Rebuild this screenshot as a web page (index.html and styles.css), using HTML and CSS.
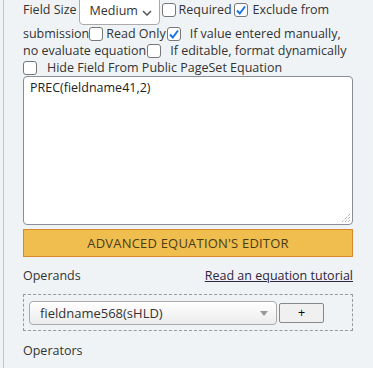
FILE: index.html
```html
<!DOCTYPE html>
<html>
<head>
<meta charset="utf-8">
<link rel="stylesheet" href="styles.css">
</head>
<body>
<div class="panel">
  <div class="row row1">
    <span class="lbl">Field Size</span>
    <span class="select">Medium
      <svg class="chev" width="10" height="6" viewBox="0 0 10 6"><path d="M1 1l4 4 4-4" fill="none" stroke="#555" stroke-width="1.5"/></svg>
    </span>
    <span class="cb"></span><span class="lbl t-req">Required</span><span class="cb checked"><svg width="12" height="12" viewBox="0 0 12 12"><path d="M2 6.5l2.8 3L10 2.5" fill="none" stroke="#1a73e8" stroke-width="2"/></svg></span><span class="lbl t-exc">Exclude from</span>
  </div>
  <div class="row row2">
    <span class="lbl">submission</span><span class="cb"></span><span class="lbl t-ro">Read Only</span><span class="cb checked"><svg width="12" height="12" viewBox="0 0 12 12"><path d="M2 6.5l2.8 3L10 2.5" fill="none" stroke="#1a73e8" stroke-width="2"/></svg></span><span class="lbl t-if">If value entered manually,</span>
  </div>
  <div class="row row3">
    <span class="lbl">no evaluate equation</span><span class="cb"></span><span class="lbl t-if2">If editable, format dynamically</span>
  </div>
  <div class="row row4">
    <span class="cb"></span><span class="lbl t-hide">Hide Field From Public PageSet Equation</span>
  </div>
  <div class="textarea">PREC(fieldname41,2)
    <svg class="grip" width="10" height="10" viewBox="0 0 10 10"><path d="M9 1L1 9M9 4L4 9M9 7L7 9" stroke="#888" stroke-width="1" stroke-dasharray="1 1"/></svg>
  </div>
  <div class="adv">ADVANCED EQUATION'S EDITOR</div>
  <div class="operands">
    <span class="lbl">Operands</span>
    <a class="link">Read an equation tutorial</a>
  </div>
  <div class="dashed">
    <div class="fsel">fieldname568(sHLD)<span class="tri"></span></div>
    <div class="plus">+</div>
  </div>
  <div class="operators">Operators</div>
</div>
</body>
</html>
```
FILE: styles.css
```css
html, body { margin: 0; padding: 0; }
body {
  background: #f0f3f6;
  font-family: "Open Sans", "Noto Sans", sans-serif;
  font-size: 12.5px;
  color: #333;
  width: 373px;
  height: 368px;
  overflow: hidden;
}
.panel {
  margin-left: 3px;
  border-left: 1px solid #c4c4c4;
  padding-left: 19px;
  width: 330px;
  height: 368px;
}
.row { display: flex; align-items: center; white-space: nowrap; height: 17px; }
.lbl { line-height: 17px; }
.row1 { height: 24px; align-items: flex-start; }
.row1 .lbl { margin-top: 1px; }
.row1 .cb { margin-top: 3px; }
.select {
  box-sizing: border-box;
  margin-top: -7px;
  margin-left: 2px;
  width: 81px;
  height: 32px;
  background: #fff;
  border: 1px solid #aaa;
  border-radius: 0 0 4px 4px;
  padding: 8px 0 0 10px;
  line-height: 17px;
  position: relative;
}
.chev { position: absolute; left: 62px; top: 16px; }
.cb {
  box-sizing: border-box;
  display: inline-flex;
  align-items: center;
  justify-content: center;
  width: 14px;
  height: 14px;
  border: 1px solid #777;
  border-radius: 3px;
  background: #fff;
  flex: none;
}
.row1 .select + .cb { margin-left: 2px; }
.t-req { margin-left: 3px; margin-right: 2px; }
.t-exc { margin-left: 5px; }
.row2 { margin-top: 1px; }
.t-ro { margin-left: 3px; margin-right: 1px; }
.t-if { margin-left: 9px; }
.row3 .cb { margin-left: 1px; }
.t-if2 { margin-left: 9px; }
.t-hide { margin-left: 10px; }
.textarea {
  box-sizing: border-box;
  position: relative;
  width: 330px;
  height: 149px;
  background: #fff;
  border: 1px solid #8a8f96;
  border-radius: 4px;
  padding: 2px 6px;
  line-height: 17px;
  font-size: 12.5px;
  color: #222;
}
.grip { position: absolute; right: 1px; bottom: 1px; }
.adv {
  box-sizing: border-box;
  margin-top: 4px;
  width: 330px;
  height: 28px;
  background: #f0be4f;
  border: 1px solid #d9892b;
  text-align: center;
  line-height: 26px;
  color: #4a3c14;
  font-size: 13px;
  letter-spacing: 0.2px;
}
.operands {
  display: flex;
  justify-content: space-between;
  width: 330px;
  margin-top: 10px;
  line-height: 17px;
}
.link { color: #2e2540; text-decoration: underline; }
.dashed {
  box-sizing: border-box;
  margin-top: 10px;
  width: 330px;
  height: 37px;
  border: 1px dashed #999;
  padding: 6px 0 0 5px;
  display: flex;
  align-items: flex-start;
}
.fsel {
  box-sizing: border-box;
  position: relative;
  width: 248px;
  height: 24px;
  border: 1px solid #aaa;
  border-radius: 4px;
  background: linear-gradient(#ffffff, #ececec);
  padding-left: 10px;
  line-height: 22px;
  color: #333;
  font-size: 13px;
}
.tri {
  position: absolute;
  right: 8px;
  top: 9px;
  width: 0; height: 0;
  border-left: 4px solid transparent;
  border-right: 4px solid transparent;
  border-top: 5px solid #999;
}
.plus {
  box-sizing: border-box;
  margin-left: 2px;
  margin-top: 2px;
  width: 45px;
  height: 20px;
  border: 1px solid #888;
  border-radius: 2px;
  background: #f0f0f0;
  text-align: center;
  line-height: 18px;
  color: #000;
}
.operators { margin-top: 11px; line-height: 17px; }
```
